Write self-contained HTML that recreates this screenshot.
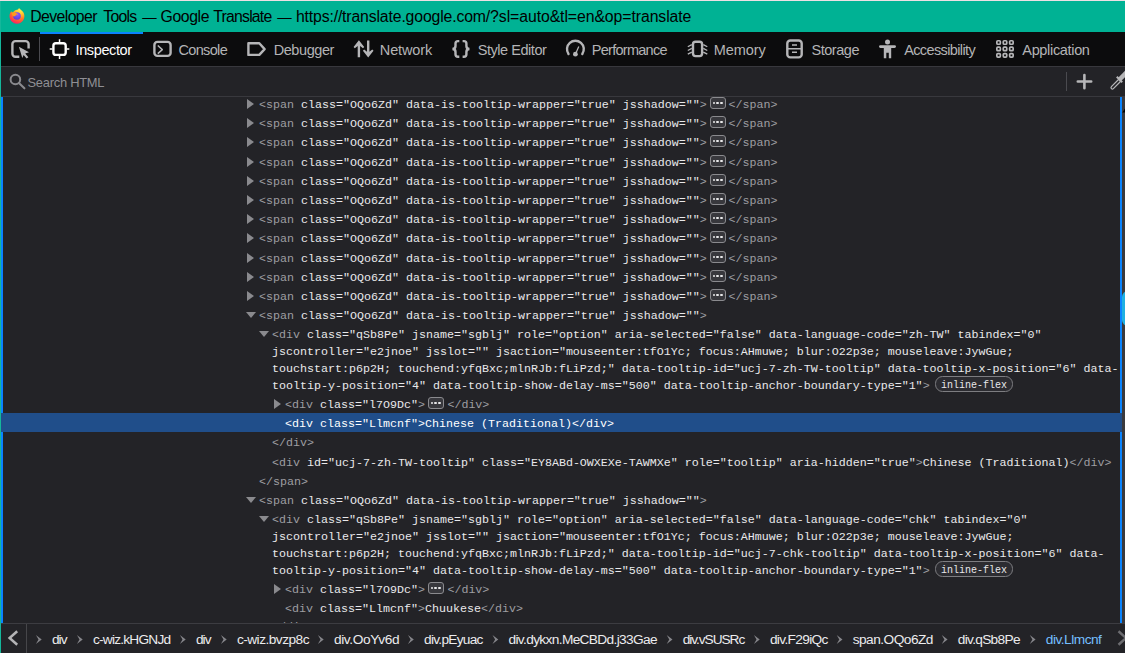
<!DOCTYPE html><html lang="en"><head><meta charset="utf-8"><title>Developer Tools — Google Translate</title><style>
*{box-sizing:border-box;margin:0;padding:0}
html,body{width:1125px;height:653px;overflow:hidden;background:#232327}
body{position:relative;font-family:"Liberation Sans",sans-serif;color:#f0f0f2}
.abs{position:absolute}
#topline{left:0;top:0;width:1125px;height:1px;background:#ece0e4}
#title{left:0;top:1px;width:1125px;height:31px;background:#00b294}
#title .t{position:absolute;top:5.5px;font-size:15.8px;line-height:20px;color:#000;white-space:nowrap}
#leftedge{left:0;top:1px;width:1px;height:652px;background:#14b79b}
#toolbar{left:1px;top:32px;width:1124px;height:34px;background:#0c0c0d}
#tbline{left:1px;top:66px;width:1124px;height:1px;background:#38383d}
#search{left:1px;top:67px;width:1124px;height:29px;background:#232327}
#search .t{position:absolute;top:6px;font-size:12.9px;line-height:20px;color:#8f8f94;white-space:nowrap}
#sline{left:1px;top:96px;width:1124px;height:1px;background:#38383d}
.tab{position:absolute;top:8px;height:20px;font-size:14.5px;line-height:20px;color:#b4b4b6;white-space:nowrap}
.tab.sel{color:#fff}
#seltab{left:40px;top:32px;width:103px;height:2px;background:#0a84ff}
#markup{left:1px;top:97px;width:1119px;height:526px;overflow:hidden;background:#232327}
.ln{position:absolute;white-space:pre;font-family:"Liberation Mono",monospace;font-size:11.673px;line-height:16px;height:16px;color:#e9e9eb}
.g{color:#9e9ea2}
.selrow{position:absolute;left:0;width:1119px;height:19px;background:#204e8a}
.w, .w .g{color:#fff}
.badge{position:absolute;height:11.5px;width:16.5px;border:1px solid #8a8a8e;border-radius:3px;background:#38383d}
.badge i{position:absolute;top:3.4px;width:2.6px;height:2.6px;background:#e8e8ea;border-radius:50%}
.flex{position:absolute;height:15.7px;width:78px;text-align:center;border:1px solid #7d7d81;border-radius:7.5px;font-family:"Liberation Mono",monospace;font-size:10px;line-height:17.4px;color:#e8e8ea;background:#2c2c31;white-space:pre}
.tw{position:absolute;width:0;height:0}
.tw.c{border-left:7px solid #8a8a8e;border-top:5.2px solid transparent;border-bottom:5.2px solid transparent}
.tw.o{border-top:6.8px solid #8a8a8e;border-left:5.3px solid transparent;border-right:5.3px solid transparent}
#lblue{left:1px;top:97px;width:2.2px;height:526px;background:#0a84ff}
#rblue{left:1120px;top:97px;width:2.2px;height:526px;background:#0a84ff}
#scroll{left:1122.2px;top:97px;width:3px;height:526px;background:#3a3a3e}
#thumb{left:1122.4px;top:291px;width:12px;height:35px;border-radius:6px;background:#1fb0e2}
#bcline{left:1px;top:623px;width:1124px;height:1px;background:#3c3c41}
#bc{left:1px;top:624px;width:1124px;height:29px;background:#232327}
.bc{position:absolute;top:5.6px;height:20px;line-height:20px;font-size:13.7px;color:#ececee;white-space:nowrap}
.bc.sel{color:#75bfff}
svg{position:absolute;overflow:visible}
</style></head><body>
<div class="abs" id="topline"></div>
<div class="abs" id="title">
<svg style="left:0;top:0" width="40" height="31" viewBox="0 1 40 31"><defs><radialGradient id="fx" gradientUnits="userSpaceOnUse" cx="20.5" cy="9.5" r="16"><stop offset="0" stop-color="#fff44f"/><stop offset="0.3" stop-color="#ffc42e"/><stop offset="0.58" stop-color="#ff7a26"/><stop offset="0.85" stop-color="#ff3650"/><stop offset="1" stop-color="#e31587"/></radialGradient><radialGradient id="fp" gradientUnits="userSpaceOnUse" cx="17.5" cy="14.5" r="5"><stop offset="0" stop-color="#9059ff"/><stop offset="1" stop-color="#5b3fe0"/></radialGradient></defs><path d="M19 7.900C20 9.600 22 10.200 23.300 12.300C24.700 14.600 24.800 17.600 23.400 20C21.800 22.800 18.600 24.300 15.400 23.600C12 22.800 9.500 19.800 9.500 16.300C9.500 14.300 10.200 12.500 11.300 11C11.500 12 11.900 12.700 12.700 13.100C13.500 11 15.400 9.700 17.400 9.800C18.200 9.300 18.800 8.700 19 7.900Z" fill="url(#fx)"/><circle cx="17" cy="16" r="3.800" fill="url(#fp)"/><path d="M11.600 12.600C13 11.900 15 12 16.300 12.900C17.100 13.500 17.500 14 18.300 14.200C17 14.300 16.200 14.700 15.700 15.400C15 16.400 13.800 16.600 12.900 15.900C12.100 15.200 11.600 14 11.600 12.600Z" fill="#ff9a1f"/></svg>
<span class="t" style="left:30.20px;letter-spacing:-0.588px">Developer</span>
<span class="t" style="left:103.20px;letter-spacing:-0.700px">Tools</span>
<span class="t" style="left:142.30px;letter-spacing:0.000px;font-size:14.4px">—</span>
<span class="t" style="left:160.50px;letter-spacing:-0.400px">Google</span>
<span class="t" style="left:213.30px;letter-spacing:-0.788px">Translate</span>
<span class="t" style="left:277.30px;letter-spacing:0.000px;font-size:14.4px">—</span>
<span class="t" style="left:295.90px;letter-spacing:-0.148px">https://translate.google.com</span>
<span class="t" style="left:485.80px;letter-spacing:-0.078px">/?sl=auto&amp;tl=en&amp;op=translate</span>
</div>
<div class="abs" id="leftedge"></div>
<div class="abs" id="toolbar">
<span class="tab sel" style="left:74.50px;letter-spacing:-0.375px">Inspector</span>
<span class="tab" style="left:177.50px;letter-spacing:-0.667px">Console</span>
<span class="tab" style="left:272.70px;letter-spacing:-0.429px">Debugger</span>
<span class="tab" style="left:378.80px;letter-spacing:-0.133px">Network</span>
<span class="tab" style="left:476.70px;letter-spacing:-0.455px">Style Editor</span>
<span class="tab" style="left:590.80px;letter-spacing:-0.730px">Performance</span>
<span class="tab" style="left:712.70px;letter-spacing:-0.080px">Memory</span>
<span class="tab" style="left:810.50px;letter-spacing:-0.467px">Storage</span>
<span class="tab" style="left:903.20px;letter-spacing:-0.625px">Accessibility</span>
<span class="tab" style="left:1021.30px;letter-spacing:-0.330px">Application</span>
</div>
<svg style="left:0;top:32px" width="1125" height="36" viewBox="0 32 1125 36" fill="none" stroke="#b6b6b8" stroke-width="2.4"><path d="M19.3 56.8 H15.4 A3 3 0 0 1 12.4 53.8 V44.1 A3 3 0 0 1 15.4 41.1 H25.6 A3 3 0 0 1 28.6 44.1 V48.6"/><path d="M18.9 46.8 L29.0 52.2 L25.2 53.6 L28.4 57.3 L26.6 58.4 L23.6 54.9 L22.3 58 Z" fill="#b6b6b8" stroke="none"/><rect x="39" y="37" width="1" height="24" fill="#4a4a4f" stroke="none"/><g stroke="#fff"><rect x="53.4" y="43.3" width="12.3" height="11.6" rx="2.5"/><path stroke-width="1.5" d="M59.55 39.3V42.3M59.55 55.9V58.9M49.7 49.1H52.4M66.7 49.1H69.3"/></g><rect x="154.4" y="41.9" width="16.2" height="14" rx="3"/><polyline points="157.8,45.5 162.3,49.6 157.8,53.6" stroke-width="1.5" stroke-linejoin="round"/><path d="M248.4 43.3 H259.3 L264.6 49.1 L259.3 54.9 H248.4 Z" stroke-linejoin="round"/><g fill="#b6b6b8" stroke="none"><path d="M358.9 40.3 L364.2 47 L363 48.3 L360.1 46 V57.3 H357.7 V46 L354.8 48.3 L353.6 47 Z"/><path d="M368.2 57.5 L373.5 50.8 L372.3 49.5 L369.4 51.8 V40.5 H367 V51.8 L364.1 49.5 L362.9 50.8 Z"/></g><path d="M459.3 41.1 H458 Q455.5 41.1 455.5 43.6 V46 Q455.5 49 452.4 49 Q455.5 49 455.5 52 V54.3 Q455.5 56.8 458 56.8 H459.3"/><path d="M462.6 41.1 H463.9 Q466.4 41.1 466.4 43.6 V46 Q466.4 49 469.5 49 Q466.4 49 466.4 52 V54.3 Q466.4 56.8 463.9 56.8 H462.6"/><path d="M568.5 54 A8.4 8.4 0 1 1 582.3 54" stroke-linecap="round"/><circle cx="575.4" cy="54.2" r="2.4" fill="#b6b6b8" stroke="none"/><path d="M575.4 54.2 L578.8 46.6" stroke-width="1.3"/><rect x="693" y="41.7" width="9.1" height="14.4" rx="2.5"/><path stroke-width="1.3" d="M687.8 46.8L691.8 44.6M687.8 50.5L691.8 48.4M687.8 54.2L691.8 52.1M703.3 44.6L707.3 46.8M703.3 48.4L707.3 50.5M703.3 52.1L707.3 54.2"/><rect x="787.3" y="40.5" width="14.4" height="16.9" rx="3"/><path stroke-width="1.5" d="M787.3 48.8H801.7M792 44.9H797M792 52.3H797"/><g fill="#b6b6b8" stroke="none"><circle cx="887.5" cy="42.1" r="2.5"/><rect x="879" y="45.2" width="17" height="2.8" rx="1.4"/><path d="M883.8 47 H891.2 V58.3 H888.8 V52.7 H886.3 V58.3 H883.8 Z"/></g><rect x="996.85" y="40.75" width="3.5" height="3.5" rx="1" stroke-width="1.7"/><rect x="996.85" y="47.15" width="3.5" height="3.5" rx="1" stroke-width="1.7"/><rect x="996.85" y="53.55" width="3.5" height="3.5" rx="1" stroke-width="1.7"/><rect x="1003.25" y="40.75" width="3.5" height="3.5" rx="1" stroke-width="1.7"/><rect x="1003.25" y="47.15" width="3.5" height="3.5" rx="1" stroke-width="1.7"/><rect x="1003.25" y="53.55" width="3.5" height="3.5" rx="1" stroke-width="1.7"/><rect x="1009.65" y="40.75" width="3.5" height="3.5" rx="1" stroke-width="1.7"/><rect x="1009.65" y="47.15" width="3.5" height="3.5" rx="1" stroke-width="1.7"/><rect x="1009.65" y="53.55" width="3.5" height="3.5" rx="1" stroke-width="1.7"/></svg>
<div class="abs" id="seltab"></div>
<div class="abs" id="tbline"></div>
<div class="abs" id="search"><span class="t" style="left:26.50px;letter-spacing:-0.250px">Search HTML</span></div>
<svg style="left:0;top:69px" width="1125" height="27" viewBox="0 69 1125 27" fill="none"><circle cx="15.4" cy="79.5" r="4.8" stroke="#8a8a8e" stroke-width="2"/><path d="M18.9 83.1L24.4 88.3" stroke="#8a8a8e" stroke-width="2.1" stroke-linecap="round"/><rect x="1066" y="72" width="1" height="19" fill="#4a4a4f"/><path d="M1077.8 81.5H1091.2M1084.4 75V88.2" stroke="#b6b6b8" stroke-width="2.6" stroke-linecap="round"/><path d="M1112.4 87.6L1119 81" stroke="#b6b6b8" stroke-width="4" stroke-linecap="round"/><path d="M1112.4 87.6L1119 81" stroke="#232327" stroke-width="1.5" stroke-linecap="round"/><path d="M1116.8 76.8L1122.2 82.2" stroke="#b6b6b8" stroke-width="2"/><path d="M1119.5 79.5L1128 71" stroke="#b6b6b8" stroke-width="4.5"/></svg>
<div class="abs" id="sline"></div>
<div class="abs" id="markup">
<span class="tw c" style="left:246.4px;top:2.3px"></span>
<div class="ln" style="left:258.10px;top:-0.5px"><span class="g">&lt;span</span> class="OQo6Zd" data-is-tooltip-wrapper="true" jsshadow=""<span class="g">&gt;</span></div>
<span class="badge" style="left:708.6px;top:0.3px"><i style="left:2.1px"></i><i style="left:5.8px"></i><i style="left:9.5px"></i></span>
<div class="ln" style="left:727.42px;top:-0.5px"><span class="g">&lt;/span&gt;</span></div>
<span class="tw c" style="left:246.4px;top:21.3px"></span>
<div class="ln" style="left:258.10px;top:18.5px"><span class="g">&lt;span</span> class="OQo6Zd" data-is-tooltip-wrapper="true" jsshadow=""<span class="g">&gt;</span></div>
<span class="badge" style="left:708.6px;top:19.3px"><i style="left:2.1px"></i><i style="left:5.8px"></i><i style="left:9.5px"></i></span>
<div class="ln" style="left:727.42px;top:18.5px"><span class="g">&lt;/span&gt;</span></div>
<span class="tw c" style="left:246.4px;top:40.3px"></span>
<div class="ln" style="left:258.10px;top:37.5px"><span class="g">&lt;span</span> class="OQo6Zd" data-is-tooltip-wrapper="true" jsshadow=""<span class="g">&gt;</span></div>
<span class="badge" style="left:708.6px;top:38.3px"><i style="left:2.1px"></i><i style="left:5.8px"></i><i style="left:9.5px"></i></span>
<div class="ln" style="left:727.42px;top:37.5px"><span class="g">&lt;/span&gt;</span></div>
<span class="tw c" style="left:246.4px;top:60.3px"></span>
<div class="ln" style="left:258.10px;top:57.5px"><span class="g">&lt;span</span> class="OQo6Zd" data-is-tooltip-wrapper="true" jsshadow=""<span class="g">&gt;</span></div>
<span class="badge" style="left:708.6px;top:58.3px"><i style="left:2.1px"></i><i style="left:5.8px"></i><i style="left:9.5px"></i></span>
<div class="ln" style="left:727.42px;top:57.5px"><span class="g">&lt;/span&gt;</span></div>
<span class="tw c" style="left:246.4px;top:79.3px"></span>
<div class="ln" style="left:258.10px;top:76.5px"><span class="g">&lt;span</span> class="OQo6Zd" data-is-tooltip-wrapper="true" jsshadow=""<span class="g">&gt;</span></div>
<span class="badge" style="left:708.6px;top:77.3px"><i style="left:2.1px"></i><i style="left:5.8px"></i><i style="left:9.5px"></i></span>
<div class="ln" style="left:727.42px;top:76.5px"><span class="g">&lt;/span&gt;</span></div>
<span class="tw c" style="left:246.4px;top:98.3px"></span>
<div class="ln" style="left:258.10px;top:95.5px"><span class="g">&lt;span</span> class="OQo6Zd" data-is-tooltip-wrapper="true" jsshadow=""<span class="g">&gt;</span></div>
<span class="badge" style="left:708.6px;top:96.3px"><i style="left:2.1px"></i><i style="left:5.8px"></i><i style="left:9.5px"></i></span>
<div class="ln" style="left:727.42px;top:95.5px"><span class="g">&lt;/span&gt;</span></div>
<span class="tw c" style="left:246.4px;top:117.3px"></span>
<div class="ln" style="left:258.10px;top:114.5px"><span class="g">&lt;span</span> class="OQo6Zd" data-is-tooltip-wrapper="true" jsshadow=""<span class="g">&gt;</span></div>
<span class="badge" style="left:708.6px;top:115.3px"><i style="left:2.1px"></i><i style="left:5.8px"></i><i style="left:9.5px"></i></span>
<div class="ln" style="left:727.42px;top:114.5px"><span class="g">&lt;/span&gt;</span></div>
<span class="tw c" style="left:246.4px;top:136.3px"></span>
<div class="ln" style="left:258.10px;top:133.5px"><span class="g">&lt;span</span> class="OQo6Zd" data-is-tooltip-wrapper="true" jsshadow=""<span class="g">&gt;</span></div>
<span class="badge" style="left:708.6px;top:134.3px"><i style="left:2.1px"></i><i style="left:5.8px"></i><i style="left:9.5px"></i></span>
<div class="ln" style="left:727.42px;top:133.5px"><span class="g">&lt;/span&gt;</span></div>
<span class="tw c" style="left:246.4px;top:156.3px"></span>
<div class="ln" style="left:258.10px;top:153.5px"><span class="g">&lt;span</span> class="OQo6Zd" data-is-tooltip-wrapper="true" jsshadow=""<span class="g">&gt;</span></div>
<span class="badge" style="left:708.6px;top:154.3px"><i style="left:2.1px"></i><i style="left:5.8px"></i><i style="left:9.5px"></i></span>
<div class="ln" style="left:727.42px;top:153.5px"><span class="g">&lt;/span&gt;</span></div>
<span class="tw c" style="left:246.4px;top:175.3px"></span>
<div class="ln" style="left:258.10px;top:172.5px"><span class="g">&lt;span</span> class="OQo6Zd" data-is-tooltip-wrapper="true" jsshadow=""<span class="g">&gt;</span></div>
<span class="badge" style="left:708.6px;top:173.3px"><i style="left:2.1px"></i><i style="left:5.8px"></i><i style="left:9.5px"></i></span>
<div class="ln" style="left:727.42px;top:172.5px"><span class="g">&lt;/span&gt;</span></div>
<span class="tw c" style="left:246.4px;top:194.3px"></span>
<div class="ln" style="left:258.10px;top:191.5px"><span class="g">&lt;span</span> class="OQo6Zd" data-is-tooltip-wrapper="true" jsshadow=""<span class="g">&gt;</span></div>
<span class="badge" style="left:708.6px;top:192.3px"><i style="left:2.1px"></i><i style="left:5.8px"></i><i style="left:9.5px"></i></span>
<div class="ln" style="left:727.42px;top:191.5px"><span class="g">&lt;/span&gt;</span></div>
<span class="tw o" style="left:244.8px;top:214.8px"></span>
<div class="ln" style="left:258.10px;top:210.5px"><span class="g">&lt;span</span> class="OQo6Zd" data-is-tooltip-wrapper="true" jsshadow=""<span class="g">&gt;</span></div>
<span class="tw o" style="left:257.9px;top:233.8px"></span>
<div class="ln" style="left:271.10px;top:229.5px"><span class="g">&lt;div</span> class="qSb8Pe" jsname="sgblj" role="option" aria-selected="false" data-language-code="zh-TW" tabindex="0"</div>
<div class="ln" style="left:271.10px;top:246.5px">jscontroller="e2jnoe" jsslot="" jsaction="mouseenter:tfO1Yc; focus:AHmuwe; blur:O22p3e; mouseleave:JywGue;</div>
<div class="ln" style="left:271.10px;top:263.5px">touchstart:p6p2H; touchend:yfqBxc;mlnRJb:fLiPzd;" data-tooltip-id="ucj-7-zh-TW-tooltip" data-tooltip-x-position="6" data-</div>
<div class="ln" style="left:271.10px;top:280.5px">tooltip-y-position="4" data-tooltip-show-delay-ms="500" data-tooltip-anchor-boundary-type="1"<span class="g">&gt;</span></div>
<span class="flex" style="left:934.1px;top:279.0px">inline-flex</span>
<span class="tw c" style="left:272.5px;top:302.3px"></span>
<div class="ln" style="left:284.10px;top:299.5px"><span class="g">&lt;div</span> class="l7O9Dc"<span class="g">&gt;</span></div>
<span class="badge" style="left:426.7px;top:300.3px"><i style="left:2.1px"></i><i style="left:5.8px"></i><i style="left:9.5px"></i></span>
<div class="ln" style="left:446.40px;top:299.5px"><span class="g">&lt;/div&gt;</span></div>
<div class="selrow" style="top:316px"></div>
<div class="ln w" style="left:284.10px;top:318.5px"><span class="g">&lt;div</span> class="Llmcnf"<span class="g">&gt;</span>Chinese (Traditional)<span class="g">&lt;/div&gt;</span></div>
<div class="ln" style="left:271.10px;top:337.5px"><span class="g">&lt;/div&gt;</span></div>
<div class="ln" style="left:271.10px;top:357.5px"><span class="g">&lt;div</span> id="ucj-7-zh-TW-tooltip" class="EY8ABd-OWXEXe-TAWMXe" role="tooltip" aria-hidden="true"<span class="g">&gt;</span>Chinese (Traditional)<span class="g">&lt;/div&gt;</span></div>
<div class="ln" style="left:258.10px;top:376.5px"><span class="g">&lt;/span&gt;</span></div>
<span class="tw o" style="left:244.8px;top:399.8px"></span>
<div class="ln" style="left:258.10px;top:395.5px"><span class="g">&lt;span</span> class="OQo6Zd" data-is-tooltip-wrapper="true" jsshadow=""<span class="g">&gt;</span></div>
<span class="tw o" style="left:257.9px;top:418.8px"></span>
<div class="ln" style="left:271.10px;top:414.5px"><span class="g">&lt;div</span> class="qSb8Pe" jsname="sgblj" role="option" aria-selected="false" data-language-code="chk" tabindex="0"</div>
<div class="ln" style="left:271.10px;top:431.5px">jscontroller="e2jnoe" jsslot="" jsaction="mouseenter:tfO1Yc; focus:AHmuwe; blur:O22p3e; mouseleave:JywGue;</div>
<div class="ln" style="left:271.10px;top:448.5px">touchstart:p6p2H; touchend:yfqBxc;mlnRJb:fLiPzd;" data-tooltip-id="ucj-7-chk-tooltip" data-tooltip-x-position="6" data-</div>
<div class="ln" style="left:271.10px;top:465.5px">tooltip-y-position="4" data-tooltip-show-delay-ms="500" data-tooltip-anchor-boundary-type="1"<span class="g">&gt;</span></div>
<span class="flex" style="left:934.1px;top:464.0px">inline-flex</span>
<span class="tw c" style="left:272.5px;top:487.3px"></span>
<div class="ln" style="left:284.10px;top:484.5px"><span class="g">&lt;div</span> class="l7O9Dc"<span class="g">&gt;</span></div>
<span class="badge" style="left:426.7px;top:485.3px"><i style="left:2.1px"></i><i style="left:5.8px"></i><i style="left:9.5px"></i></span>
<div class="ln" style="left:446.40px;top:484.5px"><span class="g">&lt;/div&gt;</span></div>
<div class="ln" style="left:284.10px;top:503.5px"><span class="g">&lt;div</span> class="Llmcnf"<span class="g">&gt;</span>Chuukese<span class="g">&lt;/div&gt;</span></div>
<div class="ln" style="left:271.10px;top:521.5px"><span class="g">&lt;/div&gt;</span></div>
</div>
<div class="abs" id="lblue"></div><div class="abs" style="left:1px;top:413px;width:3px;height:19px;background:#204e8a"></div><div class="abs" id="rblue"></div><div class="abs" style="left:1119px;top:413px;width:3.2px;height:19px;background:#204e8a"></div><div class="abs" id="scroll"></div><div class="abs" id="thumb"></div>
<svg style="left:1122px;top:106px" width="3" height="8" viewBox="0 0 3 8"><path d="M0.3 6.6 L3 2.6 V6.6 Z" fill="#000"/></svg>
<div class="abs" id="bcline"></div>
<div class="abs" id="bc">
<span class="bc" style="left:50.90px;letter-spacing:-0.900px">div</span>
<span class="bc" style="left:91.90px;letter-spacing:-0.764px">c-wiz.kHGNJd</span>
<span class="bc" style="left:194.90px;letter-spacing:-0.900px">div</span>
<span class="bc" style="left:235.90px;letter-spacing:-0.518px">c-wiz.bvzp8c</span>
<span class="bc" style="left:332.90px;letter-spacing:-0.356px">div.OoYv6d</span>
<span class="bc" style="left:423.00px;letter-spacing:-0.722px">div.pEyuac</span>
<span class="bc" style="left:507.50px;letter-spacing:-0.645px">div.dykxn.MeCBDd.j33Gae</span>
<span class="bc" style="left:681.70px;letter-spacing:-1.044px">div.vSUSRc</span>
<span class="bc" style="left:768.90px;letter-spacing:-0.656px">div.F29iQc</span>
<span class="bc" style="left:851.70px;letter-spacing:-0.520px">span.OQo6Zd</span>
<span class="bc" style="left:956.80px;letter-spacing:-0.700px">div.qSb8Pe</span>
<span class="bc sel" style="left:1044.80px;letter-spacing:-0.500px">div.Llmcnf</span>
</div>
<svg style="left:0;top:624px" width="1125" height="29" viewBox="0 624 1125 29"><polyline points="17.2,631.2 9.6,638 17.2,644.8" fill="none" stroke="#b4b4b6" stroke-width="2.5"/><rect x="26" y="624" width="1" height="29" fill="#46464a"/><path d="M35.9 635.1 L41.7 639.5 L35.9 643.9 L38.5 639.5 Z" fill="#85858a"/><path d="M76.9 635.1 L82.7 639.5 L76.9 643.9 L79.5 639.5 Z" fill="#85858a"/><path d="M179.9 635.1 L185.7 639.5 L179.9 643.9 L182.5 639.5 Z" fill="#85858a"/><path d="M220.9 635.1 L226.7 639.5 L220.9 643.9 L223.5 639.5 Z" fill="#85858a"/><path d="M317.9 635.1 L323.7 639.5 L317.9 643.9 L320.5 639.5 Z" fill="#85858a"/><path d="M408.0 635.1 L413.8 639.5 L408.0 643.9 L410.6 639.5 Z" fill="#85858a"/><path d="M492.5 635.1 L498.3 639.5 L492.5 643.9 L495.1 639.5 Z" fill="#85858a"/><path d="M666.7 635.1 L672.5 639.5 L666.7 643.9 L669.3 639.5 Z" fill="#85858a"/><path d="M753.9 635.1 L759.7 639.5 L753.9 643.9 L756.5 639.5 Z" fill="#85858a"/><path d="M836.7 635.1 L842.5 639.5 L836.7 643.9 L839.3 639.5 Z" fill="#85858a"/><path d="M941.8 635.1 L947.6 639.5 L941.8 643.9 L944.4 639.5 Z" fill="#85858a"/><path d="M1029.8 635.1 L1035.6 639.5 L1029.8 643.9 L1032.4 639.5 Z" fill="#85858a"/><polyline points="1118.5,631.2 1126,638 1118.5,644.8" fill="none" stroke="#6c6c70" stroke-width="2.5"/></svg>
</body></html>
